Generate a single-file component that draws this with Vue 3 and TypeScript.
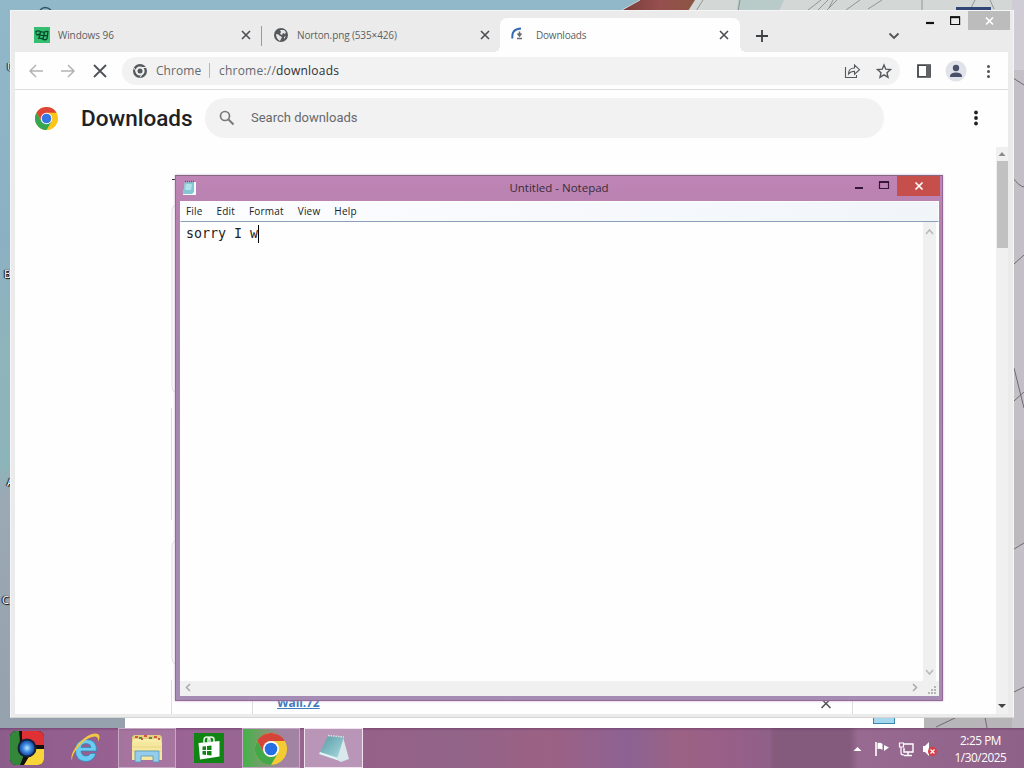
<script setup lang="ts">
interface Tab { title: string; icon: string; active: boolean }
const tabs: Tab[] = [
  { title: 'Windows 96', icon: 'win96', active: false },
  { title: 'Norton.png (535×426)', icon: 'globe', active: false },
  { title: 'Downloads', icon: 'loading', active: true },
]
const menus: string[] = ['File', 'Edit', 'Format', 'View', 'Help']
</script>

<template>
  <div class="desktop">
    <svg class="wall" width="1024" height="728" viewBox="0 0 1024 728">
      <defs>
        <linearGradient id="sky" x1="0" y1="0" x2="0" y2="1">
          <stop offset="0" stop-color="#91b8c9" /><stop offset=".33" stop-color="#8cb0c3" /><stop offset=".48" stop-color="#8fb4ba" />
          <stop offset=".64" stop-color="#8db4b8" /><stop offset=".68" stop-color="#9ba9b5" /><stop offset="1" stop-color="#95a2ae" />
        </linearGradient>
        <linearGradient id="roof"><stop offset="0" stop-color="#7a3d38" /><stop offset=".5" stop-color="#96504f" /><stop offset="1" stop-color="#8a5540" /></linearGradient>
      </defs>
      <rect width="700" height="728" fill="url(#sky)" />
      <path d="M621 11L640 0H700L688 11Z" fill="url(#roof)" />
      <path d="M622 10L640 0" stroke="#c7cfd4" />
      <rect x="698" width="326" height="11" fill="#d3d7d5" />
      <path d="M700 0h-5l-7 11h12z" fill="#d3d7d5" />
      <path d="M738 0h46l-5 11h-42z" fill="#b9cbc9" />
      <path d="M696 11l7-11M738 11l2-11M808 10l13-10M818 10l10-10M827 10l10-10M833 0l-4 8M846 10l14-10M868 9l14-9M922 0v11M970 10l5-10M990 0l4 9" stroke="#747b7a" stroke-width=".7" fill="none" />
      <rect x="700" y="600" width="324" height="128" fill="#b7b5b8" />
      <rect x="1012" y="0" width="12" height="728" fill="#c2c0c6" />
      <rect x="1012" y="0" width="12" height="70" fill="#cfccd5" />
      <rect x="1012" y="440" width="12" height="105" fill="#bcbabd" />
      <path d="M1013 78l11 7M1013 178q6 8 11 9M1014 264l10-9M1014 368l10 40M1014 401l10-9M1014 549l10-6M1014 692l10-5M936 727l21-10M985 717l2 11" stroke="#706972" stroke-width="1" fill="none" />
      <rect x="956" y="7" width="35" height="3" fill="#304675" />
      <path d="M40 10q5-5 11 0" stroke="#35505f" fill="none" stroke-width="1.4" />
      <rect x="125" y="715" width="799" height="13" fill="#fff" />
      <rect x="873.500" y="715" width="21" height="8.500" fill="#a5d8ef" stroke="#398aaa" />
    </svg>
    <span class="lbl l1">U</span><span class="lbl l2">B</span><span class="lbl l3">A</span><span class="lbl l4">C</span>

    <section class="chrome">
      <div class="controls">
        <svg width="42" height="19"><path d="M8 12h8" stroke="#111" stroke-width="2.2" /><path d="M32.600 6h9v7.500h-9z" stroke="#111" fill="none" stroke-width="1.2" /><path d="M32 6.200h10" stroke="#111" stroke-width="2" /></svg>
        <div class="closebox"><svg width="12" height="10"><path d="M3 1.500l7 7M10 1.500L3 8.500" stroke="#fff" stroke-width="1.6" /></svg></div>
      </div>
      <div class="tabs">
        <div v-for="t in tabs" :key="t.title" class="tab" :class="[{ active: t.active }, t.icon]">
          <svg v-if="t.icon === 'win96'" width="16" height="16" viewBox="0 0 16 16"><rect width="16" height="16" fill="#35bd70" /><path d="M1.500 5q2-2 5-.5t7-.5M1.500 5.500l1 1M6.500 4.500L5 11M10.500 5L9 12M14 4l-1 8M2 8q3-1 4.500 0t7 .500M4 11.500q2-1 4.500.5t4.500 0" stroke="#06462d" stroke-width="1.300" fill="none" /></svg>
          <svg v-else-if="t.icon === 'globe'" width="14" height="14" viewBox="0 0 14 14"><circle cx="7" cy="7" r="7" fill="#54575b" /><path d="M2 6q3 0 4 2l2 1-2 4Q2 11 2 6zM6 2l4 0 2 2-1 2-2-1-1 2-2-1 1-2zM10 9l2-1-2 3z" fill="#e5e5e5" /></svg>
          <svg v-else width="16" height="16" viewBox="0 0 16 16"><path d="M1.500 11.500Q0 2 10 1.500" stroke="#3569b8" fill="none" stroke-width="2" /><path d="M8.500 4.500v4M6.500 6.500l2 2.500 2-2.500M6 11.500h5" stroke="#6a6a70" fill="none" stroke-width="1.500" /></svg>
          <span class="title">{{ t.title }}</span>
          <svg class="x" width="10" height="10"><path d="M1 1l8 8M9 1L1 9" stroke="#4b4d50" stroke-width="1.6" /></svg>
        </div>
        <svg class="plus" width="12" height="12"><path d="M6 0v12M0 6h12" stroke="#3c4043" stroke-width="1.800" /></svg>
        <svg class="chev" width="12" height="8"><path d="M1.500 1.500l4.500 4.500 4.500-4.500" stroke="#505357" stroke-width="1.8" fill="none" /></svg>
      </div>
      <div class="client">
        <div class="toolbar">
          <svg class="nav" width="100" height="37" viewBox="15 52 100 37"><g fill="none" stroke-width="1.500"><path d="M43 71H30M36 65l-6 6 6 6M61 71h13M68 65l6 6-6 6" stroke="#b2b4b6" /><path d="M94 65l12 12M106 65L94 77" stroke="#4e5155" stroke-width="1.800" /></g></svg>
          <div class="omni">
            <svg width="14" height="14" viewBox="0 0 14 14"><circle cx="7" cy="7" r="5.800" fill="none" stroke="#55595d" stroke-width="2.400" /><circle cx="7" cy="7" r="2.500" fill="#55595d" /><path d="M7 3.500h6M4 8.800L1 4M10 8.800L7 13.500" stroke="#eee" stroke-width="1" /></svg>
            <span class="scheme">Chrome</span><i></i><span class="url">chrome://<b>downloads</b></span>
            <svg class="acts" width="52" height="18" viewBox="842 62 52 18"><g fill="none" stroke="#55585c" stroke-width="1.100"><path d="M845.500 67v10.500h11v-2.500M848.500 74q0-6 6-6v-3l5 4.700-5 4.500v-3q-4 0-6 2.800z" /><path d="M884 65l1.800 4.200 4.700.4-3.500 3.100 1 4.500-4-2.400-4 2.400 1-4.500-3.500-3.100 4.700-.4z" stroke-width="1.400" /></g></svg>
          </div>
          <svg class="tools" width="108" height="37" viewBox="900 52 108 37"><path d="M918 65.200h12v11.600h-12z" fill="none" stroke="#44474a" stroke-width="1.800" /><path d="M926 65h4v12h-4z" fill="#606266" /><circle cx="956" cy="71" r="10.500" fill="#e1e2ea" /><circle cx="956" cy="68" r="3.200" fill="#4a506a" /><path d="M950 77v-1.500q1-3 6-3t6 3V77z" fill="#4a506a" /><g fill="#505357"><circle cx="988.500" cy="66.500" r="1.500" /><circle cx="988.500" cy="71.500" r="1.500" /><circle cx="988.500" cy="76.500" r="1.500" /></g></svg>
        </div>
        <div class="page">
          <header>
            <svg class="logo" width="23" height="23" viewBox="0 0 48 48"><circle cx="24" cy="24" r="24" fill="#fbc51b" /><path d="M3.200 12A24 24 0 0 1 44.800 12H24L13.600 30z" fill="#de4538" /><path d="M3.200 12A24 24 0 0 0 24 48L34.400 30H13.600z" fill="#35a652" /><circle cx="24" cy="24" r="12" fill="#fff" /><circle cx="24" cy="24" r="10" fill="#3577e5" /></svg>
            <h1>Downloads</h1>
            <div class="search"><svg width="16" height="16"><circle cx="6" cy="6" r="4.500" fill="none" stroke="#77797c" stroke-width="1.700" /><path d="M9.500 9.500l5 5" stroke="#77797c" stroke-width="1.900" /></svg><span>Search downloads</span></div>
            <svg class="dots" width="6" height="16"><circle cx="3" cy="2.500" r="1.900" /><circle cx="3" cy="8" r="1.900" /><circle cx="3" cy="13.500" r="1.900" /></svg>
          </header>
          <svg class="cards" width="981" height="569" viewBox="15 145 981 569"><path d="M172 179.500h4" stroke="#222" /><g fill="none" stroke="#dfdce0"><path d="M176 205q-4 1-4 5v177q0 4 4 6M171.500 408v112M176 540q-4 2-4 6v112q0 5 4 7M171.500 680v34M252.500 700v14M852.500 700v14" /></g><path d="M821.500 699l9 9M830.500 699l-9 9" stroke="#555" stroke-width="1.600" /></svg>
          <a class="file">Wall.72</a>
          <div class="sb"><svg width="12" height="567" viewBox="0 0 12 567"><path d="M2.500 9l3.500-4 3.500 4z" fill="#8b8b8b" /><path d="M2 557h8l-4 4z" fill="#444" /></svg><div class="thumb"></div></div>
        </div>
      </div>
    </section>

    <section class="notepad">
      <div class="nbar">
        <svg class="nicon" width="16" height="16" viewBox="0 0 16 16"><path d="M3 2h11v13H1z" fill="#f1fbfc" /><path d="M3 2h9v10l-2 2H1z" fill="#85c6d5" /><path d="M4 4h6L9 10H3z" fill="#b2e2e9" /><path d="M3 1.500h10" stroke="#526370" stroke-width="1.500" stroke-dasharray="1 1" /></svg>
        <span>Untitled - Notepad</span>
        <svg class="nctl" width="44" height="20" viewBox="853 176 44 20"><path d="M855 188h8" stroke="#35163a" stroke-width="2" /><path d="M879.500 182h9v6.500h-9z" fill="none" stroke="#35163a" stroke-width="1.200" /><path d="M879 182h10" stroke="#35163a" stroke-width="2" /></svg>
        <div class="nclose"><svg width="10" height="10"><path d="M1.500 1.500l7 7M8.500 1.500l-7 7" stroke="#fff" stroke-width="1.700" /></svg></div>
      </div>
      <div class="inner">
        <nav><span v-for="m in menus" :key="m">{{ m }}</span></nav>
        <div class="edit"><div class="text">sorry I w<i></i></div><div class="vs"><svg width="13" height="459"><path d="M3 12l3.500-4 3.500 4M3 448l3.500 4 3.500-4" fill="none" stroke="#b5b8be" stroke-width="1.500" /></svg></div></div>
        <div class="hs"><svg width="759" height="15" viewBox="180 681 759 15"><path d="M190 684l-3.500 3.500 3.500 3.500M913 684l3.500 3.500-3.500 3.500" fill="none" stroke="#a9acb2" stroke-width="1.600" /><path d="M928 693h2M931 693h2M934 693h2M931 690h2M934 690h2M934 687h2" stroke="#b5b5b5" stroke-width="2" /></svg></div>
      </div>
    </section>

    <footer>
      <div class="slot s1"><svg width="34" height="34" viewBox="0 0 34 34"><defs><clipPath id="rr"><rect width="34" height="34" rx="6" /></clipPath><radialGradient id="orb"><stop offset="0" stop-color="#bceaff" /><stop offset=".55" stop-color="#3c8adf" /><stop offset="1" stop-color="#1c4ca4" /></radialGradient></defs><g clip-path="url(#rr)"><rect width="34" height="34" fill="#111" /><path d="M0 0h9q1 8 1 13l4 11-4 10H0z" fill="#348638" /><path d="M12 0h22v14H17l-5-6z" fill="#df3034" /><path d="M22 18h12v16H14l6-10z" fill="#f9d438" /></g><circle cx="17" cy="17" r="9.500" fill="#14213a" /><circle cx="17" cy="17" r="7.500" fill="url(#orb)" /></svg></div>
      <div class="slot s2"><svg width="32" height="32" viewBox="0 0 32 32"><path fill-rule="evenodd" d="M27.500 19H12q.5 5 5 5 3 0 4.500-2.500h5.500Q24 29.500 17 29.500 6.500 29 6.500 18.500T17 7.500q11 0 10.500 11.500zM12 15.500h10q-.5-4-5-4t-5 4z" fill="#6ccbf2" stroke="#218abc" stroke-width=".7" /><path d="M4 30Q-1 25 9 12 21-1 29 2q3 2 0 8 1-7-6-5Q15 7 7 18 1 27 4 30z" fill="#f2c940" /></svg></div>
      <div class="slot boxed s3"><svg width="34" height="32" viewBox="0 0 34 32"><path d="M2 4l2-2h26l2 2v21H2z" fill="#e4cd7c" /><path d="M3 6h28v6H3z" fill="#f7edaa" /><path d="M2 9h30v18H2z" fill="#f5e79d" /><path d="M5 4h3M14 3h3M24 4h3M11 6h2M28 6h2" stroke="#d05a44" stroke-width="2" /><path d="M9 5h3M19 5h3" stroke="#548d4a" stroke-width="2" /><path d="M2 14h30M2 18h30" stroke="#e9d484" /><path d="M5 29V18h24v11h-6v-6H11v6z" fill="#93cdeb" stroke="#5797b8" stroke-width=".8" /></svg></div>
      <div class="slot s4"><svg width="30" height="30" viewBox="0 0 30 30"><rect width="30" height="30" fill="#108513" /><path d="M4.500 10l21-2v15.500L6 26.500z" fill="#fff" /><path d="M10 11V7q0-3 3-3t3 3v3M14 9V6.500q0-2.500 3-2.500t3 2.500V9" fill="none" stroke="#e8f6e8" stroke-width="1.500" /><path d="M8.500 13.600l3.500-.4V17H8.500zM13 13.100l4.500-.5V17H13zM8.500 18H12v3.900l-3.500-.4zM13 18h4.500v4.500l-4.500-.5z" fill="#108513" /></svg></div>
      <div class="slot boxed chromeSlot"><svg width="32" height="32" viewBox="0 0 48 48"><circle cx="24" cy="24" r="24" fill="#f5cb34" /><path d="M3.200 12A24 24 0 0 1 44.800 12H24L13.600 30z" fill="#d54439" /><path d="M3.200 12A24 24 0 0 0 24 48L34.400 30H13.600z" fill="#44a84a" /><circle cx="24" cy="24" r="12" fill="#fff" /><circle cx="24" cy="24" r="9.500" fill="#276de3" /></svg></div>
      <div class="slot boxed current"><svg width="32" height="30" viewBox="0 0 32 30"><defs><linearGradient id="note" x2="1" y2="1"><stop stop-color="#5799a4" /><stop offset="1" stop-color="#acdce0" /></linearGradient></defs><path d="M25 3l6 22-8 3-6-3z" fill="#d9e8ea" /><path d="M10 2l16 1-7 22L1 20z" fill="url(#note)" /><path d="M10 1.500l16 1.500" stroke="#d5e5e8" stroke-width="1.500" stroke-dasharray="1.500 1" /><path d="M1 20l18 6 1-2L2 18z" fill="#e2f4f5" /></svg></div>
      <svg class="tray" width="90" height="20" viewBox="850 739 90 20"><path d="M853.500 751l4-4 4 4z" fill="#fff" /><path d="M876 742v14" stroke="#fff" stroke-width="1.600" /><path d="M877.500 743q3-1 5 1v6q-2-2-5-1zM884 745l5 2.500-5 3.500z" fill="#fff" /><path d="M903.500 744H913v8h-9v-4M908 752v3M904 755.500h8" fill="none" stroke="#fff" stroke-width="1.400" /><path d="M899.500 743h4v4h-4zM901 747v6q0 2 3 2" fill="none" stroke="#fff" stroke-width="1.200" /><path d="M923 746h2l4-4v14l-4-4h-2z" fill="#fff" /><circle cx="932.500" cy="751.500" r="4.500" fill="#d33e48" /><path d="M930.500 749.500l4 4M934.500 749.500l-4 4" stroke="#fff" stroke-width="1.200" /></svg>
      <div class="clock"><span>2:25 PM</span><span>1/30/2025</span></div>
    </footer>
  </div>
</template>

<style>
html, body { margin: 0; overflow: hidden; }
</style>
<style scoped>
* { box-sizing: border-box; }
svg { display: block; flex: none; }
.desktop { position: relative; width: 1024px; height: 768px; overflow: hidden; background: #91b8c9; font-family: "Open Sans", sans-serif; }
.wall { position: absolute; left: 0; top: 0; }
.lbl { position: absolute; font: 11px "Open Sans", sans-serif; color: #fff; text-shadow: 0 0 1px #000, 1px 1px 1px #000, -1px 0 1px #000; }
.l1 { left: 7px; top: 59px; } .l2 { left: 4px; top: 266px; } .l3 { left: 7px; top: 474px; } .l4 { left: 2px; top: 592px; }
.chrome { position: absolute; left: 10px; top: 10px; width: 1004px; height: 708px; background: #ebebeb; border: 1px solid #f6f5f5; border-bottom-color: #d5d5d4; padding: 0 5px 3px 4px; }
.controls { position: absolute; right: 3px; top: 0; display: flex; height: 19px; }
.controls > svg { margin-right: 8px; overflow: visible; }
.closebox { width: 42px; height: 19px; background: #bcbcbc; display: flex; align-items: center; justify-content: center; }
.tabs { height: 41px; display: flex; padding-top: 7px; }
.tab { height: 34px; display: flex; align-items: center; font-size: 10px; color: #5c5f62; }
.tab .x { margin-left: auto; }
.title { white-space: nowrap; }
.win96 { width: 246px; padding: 0 10px 0 19px; }
.win96 .title { margin-left: 8px; letter-spacing: -.08px; }
.globe { width: 239px; padding: 0 10px 0 13px; position: relative; }
.globe::before { content: ""; position: absolute; left: 0; top: 8px; height: 20px; width: 1px; background: #9a9a9a; }
.globe .title { margin-left: 9px; letter-spacing: -.12px; }
.active { width: 240px; padding: 0 11px 0 11px; background: #fefefe; border-radius: 7px 7px 0 0; position: relative; }
.active .title { margin-left: 9px; letter-spacing: -.2px; }
.active::before, .active::after { content: ""; position: absolute; bottom: 0; width: 6px; height: 6px; }
.active::before { left: -6px; background: radial-gradient(circle at 0 0, transparent 6px, #fefefe 6px); }
.active::after { right: -6px; background: radial-gradient(circle at 100% 0, transparent 6px, #fefefe 6px); }
.plus { margin: 12px 0 0 16px; } .chev { margin: 14px 0 0 120px; }
.client { height: 662px; background: #fefefe; }
.toolbar { height: 38px; display: flex; align-items: center; border-bottom: 1px solid #dcddde; overflow: hidden; }
.nav { margin-right: 7px; }
.omni { flex: none; width: 778px; height: 28px; border-radius: 14px; background: #f2f2f2; display: flex; align-items: center; padding: 0 6px 0 11px; font-size: 12px; color: #66696c; }
.scheme { margin-left: 9px; width: 45px; letter-spacing: .05px; }
.omni i { width: 1px; height: 15px; background: #b5b6b7; margin: 0 9px 0 8px; }
.url { letter-spacing: .22px; } .url b { font-weight: 400; color: #2d2f32; }
.acts { margin-left: auto; }
.page { height: 624px; position: relative; }
header { height: 56px; display: flex; align-items: center; padding: 0 0 0 20px; }
h1 { flex: none; margin: 0 13px 0 23px; width: 111px; font: 500 22.500px Roboto, sans-serif; letter-spacing: 0; color: #202124; }
.search { flex: none; width: 679px; height: 40px; border-radius: 20px; background: #f2f2f2; display: flex; align-items: center; padding-left: 14px; gap: 16px; font: 13px Roboto, sans-serif; letter-spacing: 0; color: #67696c; }
.search span { margin-bottom: 1px; }
.dots { margin-left: 89px; fill: #222; }
.cards { position: absolute; left: 0; top: 55px; }
.file { position: absolute; left: 262px; top: 604px; font: bold 12px "Open Sans", sans-serif; letter-spacing: -.1px; color: #417bbd; text-decoration: underline; }
.sb { position: absolute; right: 0; top: 57px; width: 12px; height: 567px; background: #f0f0f0; }
.thumb { position: absolute; top: 14px; left: 1px; width: 11px; height: 87px; background: #c1c1c1; }
.notepad { position: absolute; left: 175px; top: 175px; width: 768px; height: 526px; background: linear-gradient(#be84b5 0, #b681af 40px, #a386b0 180px, #a58cb5); border: 1px solid #936995; border-top-color: #876781; box-shadow: 0 0 2px #c9a9c9; padding: 0 3px 4px; }
.nbar { height: 25px; display: flex; position: relative; }
.nbar > span { position: absolute; left: 0; right: 0; top: 4px; text-align: center; font-size: 11.500px; line-height: 16px; color: #382c38; }
.nicon { margin: 4px 0 0 3px; }
.nctl { margin-left: auto; }
.nclose { width: 43px; height: 20px; margin-right: -1px; background: #c64e4b; display: flex; align-items: center; justify-content: center; }
.inner { width: 759px; margin-left: 1px; background: #fefefe; }
nav { height: 21px; border: 1px solid #fff; border-bottom: 1px solid #8b9eba; background: linear-gradient(90deg, #fcfdff, #f1f5fa); display: flex; align-items: center; gap: 14px; padding: 0 0 2px 5px; font-size: 10px; color: #222; letter-spacing: .18px; }
.edit { height: 459px; display: flex; }
.text { flex: 1; padding: 3px 0 0 6px; font: 13.300px/17px "DejaVu Sans Mono", monospace; color: #222; display: flex; }
.text i { width: 1px; height: 18px; background: #000; }
.vs { width: 13px; background: #f0f0f0; margin-right: 3px; }
.hs { height: 15px; background: #f0f0f0; }
footer { position: absolute; left: 0; top: 728px; width: 1024px; height: 40px; display: flex; background: linear-gradient(180deg, rgba(80,35,80,.35) 0, transparent 3px), linear-gradient(90deg, #8c5d8b 0, #9b6293 150px, #986794 250px, #966189 370px, #926488 460px, #9c6184 550px, #8c6293 630px, #9c6283 680px, #995f88 720px, #8f6089 770px, #845b7d 773px, #845b7d 850px, #986a91 858px, #8e6188 1024px); }
.slot { height: 40px; display: flex; align-items: center; justify-content: center; }
.s1 { width: 54px; } .s2 { width: 64px; padding-right: 2px; }
.s3 { width: 58px; } .s4 { width: 66px; }
.boxed { border: 1px solid #c4a8c4; background: rgba(255,255,255,.12); padding-top: 2px; }
.chromeSlot { width: 58px; background: linear-gradient(90deg, #42b348, #7f9a72 40%, #a383a4 70%); }
.current { width: 59px; margin-left: 4px; background: #b995b7; border-color: #f0e2ee; }
.tray { margin: 11px 0 0 487px; }
.clock { width: 81px; padding-top: 4px; display: flex; flex-direction: column; align-items: center; color: #fff; font-size: 11.800px; line-height: 17px; letter-spacing: -.45px; }
</style>
